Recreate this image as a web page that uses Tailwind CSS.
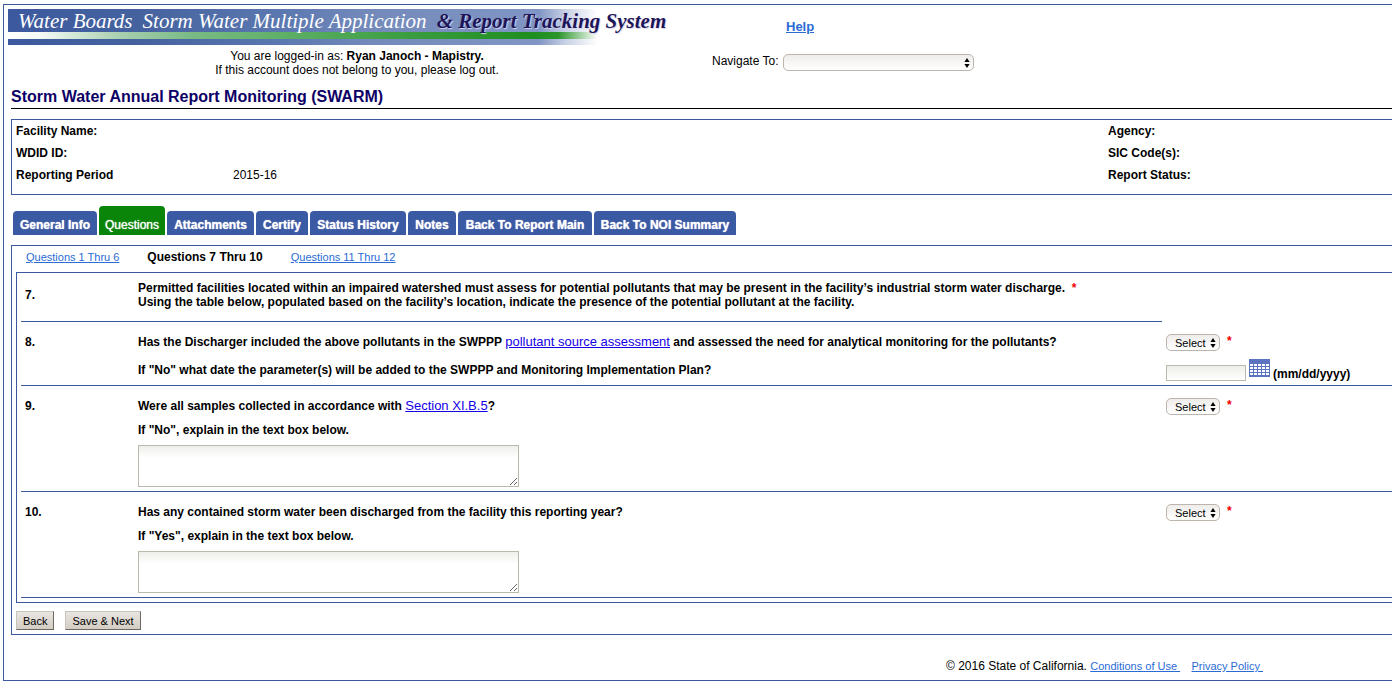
<!DOCTYPE html>
<html lang="en">
<head>
<meta charset="utf-8">
<meta name="viewport" content="width=device-width, initial-scale=1">
<title>Storm Water Annual Report Monitoring (SWARM)</title>
<script src="https://cdn.jsdelivr.net/npm/@tailwindcss/browser@4"></script>
</head>
<body class="bg-white pt-1 pl-[3px] font-['Liberation_Sans',Arial,sans-serif] text-xs leading-[14px] text-black">
<svg class="hidden" aria-hidden="true">
  <symbol id="updown" viewBox="0 0 6 10"><path d="M3 0 5.6 4H.4zM3 10 .4 6h5.2z" fill="#000"/></symbol>
</svg>
<div class="border border-r-0 border-[#3b57a0] pb-[7px]">
  <header class="flex pl-1">
    <div class="w-[698px] pt-1">
      <div class="relative h-9 w-[655px] bg-[linear-gradient(90deg,#3c599f_0%,#45629f_20%,#5b78b0_42%,#7389ba_55%,#7d93c1_75%,#8095c4_81%,#c6d0e4_85%,#ffffff_90%)]">
        <div class="absolute inset-x-0 top-[23px] h-[7px] bg-[linear-gradient(90deg,#ffffff_0%,#f4faf5_5%,#a8d0b0_17%,#7abb85_28%,#55ab5c_47%,#3a9c3e_62%,#1e8e1e_80%,#2b952b_84%,#ffffff_90%)]"></div>
        <p class="absolute top-0 left-[10px] flex gap-[10px] font-['Liberation_Serif',serif] text-[21px] leading-6 whitespace-nowrap italic">
          <span class="text-white">Water Boards</span>
          <span class="text-white">Storm Water Multiple Application</span>
          <span class="font-bold text-[#1d1557] [text-shadow:1px_1px_1px_#d8d4ee]">&amp; Report Tracking System</span>
        </p>
      </div>
      <p class="pt-1 text-center">You are logged-in as: <b>Ryan Janoch - Mapistry.</b><br>If this account does not belong to you, please log out.</p>
    </div>
    <div class="flex flex-col items-start pl-[6px]">
      <a href="#" class="mt-[15px] ml-[74px] text-[13px] font-bold text-[#2a6bd6] underline">Help</a>
      <div class="mt-5 flex items-start gap-1">
        <label for="nav">Navigate To:</label>
        <div class="relative">
          <select id="nav" class="block h-[17px] w-[191px] appearance-none rounded-[5px] border border-[#bcb5ad] bg-linear-to-b from-[#efedea] to-white px-2 text-[11px]"><option></option></select>
          <svg class="pointer-events-none absolute top-1 right-1 h-[10px] w-[6px]"><use href="#updown"/></svg>
        </div>
      </div>
    </div>
  </header>

  <main class="pl-[7px]">
    <h1 class="border-b border-black pt-[11px] pb-[2px] text-base leading-[18px] font-bold text-[#0d0066]">Storm Water Annual Report Monitoring (SWARM)</h1>

    <dl class="mt-2.5 grid grid-cols-[217px_minmax(0,1fr)_284px] border border-r-0 border-[#3b57a0] pb-2 pl-1 leading-[22px]">
      <dt class="font-bold">Facility Name:</dt><dd></dd><dt class="font-bold">Agency:</dt>
      <dt class="font-bold">WDID ID:</dt><dd></dd><dt class="font-bold">SIC Code(s):</dt>
      <dt class="font-bold">Reporting Period</dt><dd>2015-16</dd><dt class="font-bold">Report Status:</dt>
    </dl>

    <nav class="mt-[11px] flex items-end gap-[2px] pl-[2px] text-center font-bold text-white [text-shadow:0_0_1px_#ffffff]">
      <a href="#" class="w-[84px] rounded-t-[4px] bg-[#3b5aa4] pt-[7px] pb-[3px]">General Info</a>
      <a href="#" class="w-[66px] rounded-t-[4px] bg-[#0a850a] pt-3 pb-[3px] font-normal" aria-current="page">Questions</a>
      <a href="#" class="w-[87px] rounded-t-[4px] bg-[#3b5aa4] pt-[7px] pb-[3px]">Attachments</a>
      <a href="#" class="w-[52px] rounded-t-[4px] bg-[#3b5aa4] pt-[7px] pb-[3px]">Certify</a>
      <a href="#" class="w-[96px] rounded-t-[4px] bg-[#3b5aa4] pt-[7px] pb-[3px]">Status History</a>
      <a href="#" class="w-[48px] rounded-t-[4px] bg-[#3b5aa4] pt-[7px] pb-[3px]">Notes</a>
      <a href="#" class="w-[134px] rounded-t-[4px] bg-[#3b5aa4] pt-[7px] pb-[3px]">Back To Report Main</a>
      <a href="#" class="w-[142px] rounded-t-[4px] bg-[#3b5aa4] pt-[7px] pb-[3px]">Back To NOI Summary</a>
    </nav>

    <section class="mt-2.5 border border-r-0 border-[#3b57a0] pb-1 pl-1">
      <nav class="flex gap-7 pt-1 pb-2 pl-[10px]">
        <a href="#" class="text-[11px] text-[#2a6bd6] underline">Questions 1 Thru 6</a>
        <b>Questions 7 Thru 10</b>
        <a href="#" class="text-[11px] text-[#2a6bd6] underline">Questions 11 Thru 12</a>
      </nav>

      <form>
        <div class="border border-r-0 border-[#3b57a0] pb-1 pl-1 font-bold">
          <div class="mr-[230px] grid grid-cols-[113px_minmax(0,1fr)] items-center border-b border-[#3b57a0] pt-2 pb-3 pl-1">
            <p>7.</p>
            <p class="whitespace-nowrap">Permitted facilities located within an impaired watershed must assess for potential pollutants that may be present in the facility’s industrial storm water discharge. &nbsp;<span class="text-[#f00000]">*</span><br>Using the table below, populated based on the facility’s location, indicate the presence of the potential pollutant at the facility.</p>
          </div>

          <div class="grid grid-cols-[113px_minmax(0,1fr)_226px] border-b border-[#3b57a0] pt-3 pb-1 pl-1">
            <p class="pt-px">8.</p>
            <div>
              <p class="pt-px"><label for="q8">Has the Discharger included the above pollutants in the SWPPP</label> <a href="#" class="text-[13px] font-normal text-[#1400e6] underline">pollutant source assessment</a> and assessed the need for analytical monitoring for the pollutants?</p>
              <label for="q8date" class="mt-[14px] block">If "No" what date the parameter(s) will be added to the SWPPP and Monitoring Implementation Plan?</label>
            </div>
            <div>
              <div class="flex gap-[7px]">
                <div class="relative">
                  <select id="q8" class="block h-[17px] w-[54px] appearance-none rounded-[5px] border border-[#bcb5ad] bg-linear-to-b from-[#efedea] to-white pl-2 text-[11px] font-normal"><option>Select</option></select>
                  <svg class="pointer-events-none absolute top-1 right-1 h-[10px] w-[6px]"><use href="#updown"/></svg>
                </div>
                <span class="text-[#f00000]">*</span>
              </div>
              <div class="mt-2 flex items-end gap-[3px]">
                <input id="q8date" type="text" class="h-4 w-20 border border-[#bcb8ac] bg-linear-to-b from-[#eeeeea] to-white px-1 text-[11px] font-normal">
                <button type="button" aria-label="Pick a date" class="mb-1">
                  <svg class="block h-[18px] w-[21px]" viewBox="0 0 21 18"><path fill="#5c73c0" d="M0 0h21v18H0z"/><path fill="none" stroke="#fff" stroke-width="2" stroke-dasharray="3 1" d="M1 6h19M1 9h19M1 12h19M1 15h19"/></svg>
                </button>
                <span>(mm/dd/yyyy)</span>
              </div>
            </div>
          </div>

          <div class="grid grid-cols-[113px_minmax(0,1fr)_226px] border-b border-[#3b57a0] pt-3 pb-1 pl-1">
            <p class="pt-px">9.</p>
            <div>
              <p class="pt-px"><label for="q9">Were all samples collected in accordance with</label> <a href="#" class="text-[13px] font-normal text-[#1400e6] underline">Section XI.B.5</a>?</p>
              <label for="q9text" class="mt-[10px] block">If "No", explain in the text box below.</label>
              <textarea id="q9text" class="mt-2 block h-[42px] w-[381px] border border-[#bcb8ac] bg-linear-to-b from-[#eeeeea] to-white to-30% p-1 font-normal"></textarea>
            </div>
            <div class="flex items-start gap-[7px]">
              <div class="relative">
                <select id="q9" class="block h-[17px] w-[54px] appearance-none rounded-[5px] border border-[#bcb5ad] bg-linear-to-b from-[#efedea] to-white pl-2 text-[11px] font-normal"><option>Select</option></select>
                <svg class="pointer-events-none absolute top-1 right-1 h-[10px] w-[6px]"><use href="#updown"/></svg>
              </div>
              <span class="text-[#f00000]">*</span>
            </div>
          </div>

          <div class="grid grid-cols-[113px_minmax(0,1fr)_226px] border-b border-[#3b57a0] pt-3 pb-1 pl-1">
            <p class="pt-px">10.</p>
            <div>
              <p class="pt-px"><label for="q10">Has any contained storm water been discharged from the facility this reporting year?</label></p>
              <label for="q10text" class="mt-[10px] block">If "Yes", explain in the text box below.</label>
              <textarea id="q10text" class="mt-2 block h-[42px] w-[381px] border border-[#bcb8ac] bg-linear-to-b from-[#eeeeea] to-white to-30% p-1 font-normal"></textarea>
            </div>
            <div class="flex items-start gap-[7px]">
              <div class="relative">
                <select id="q10" class="block h-[17px] w-[54px] appearance-none rounded-[5px] border border-[#bcb5ad] bg-linear-to-b from-[#efedea] to-white pl-2 text-[11px] font-normal"><option>Select</option></select>
                <svg class="pointer-events-none absolute top-1 right-1 h-[10px] w-[6px]"><use href="#updown"/></svg>
              </div>
              <span class="text-[#f00000]">*</span>
            </div>
          </div>
        </div>

        <div class="mt-2 flex gap-[11px] text-[11px]">
          <button type="button" class="h-[19px] border border-t-[#c8c4bc] border-r-[#6c6864] border-b-[#6c6864] border-l-[#c8c4bc] bg-linear-to-b from-[#e9e5e1] to-[#d3cdc3] px-[6px]">Back</button>
          <button type="submit" class="h-[19px] border border-t-[#c8c4bc] border-r-[#6c6864] border-b-[#6c6864] border-l-[#c8c4bc] bg-linear-to-b from-[#e9e5e1] to-[#d3cdc3] px-[6px]">Save &amp; Next</button>
        </div>
      </form>
    </section>
  </main>

  <footer class="flex justify-end pt-6 pr-[129px]">
    <p>© 2016 State of California. <a href="#" class="text-[11px] whitespace-pre text-[#2a6bd6] underline">Conditions of Use </a> <a href="#" class="ml-2 text-[11px] whitespace-pre text-[#2a6bd6] underline">Privacy Policy </a></p>
  </footer>
</div>
</body>
</html>
